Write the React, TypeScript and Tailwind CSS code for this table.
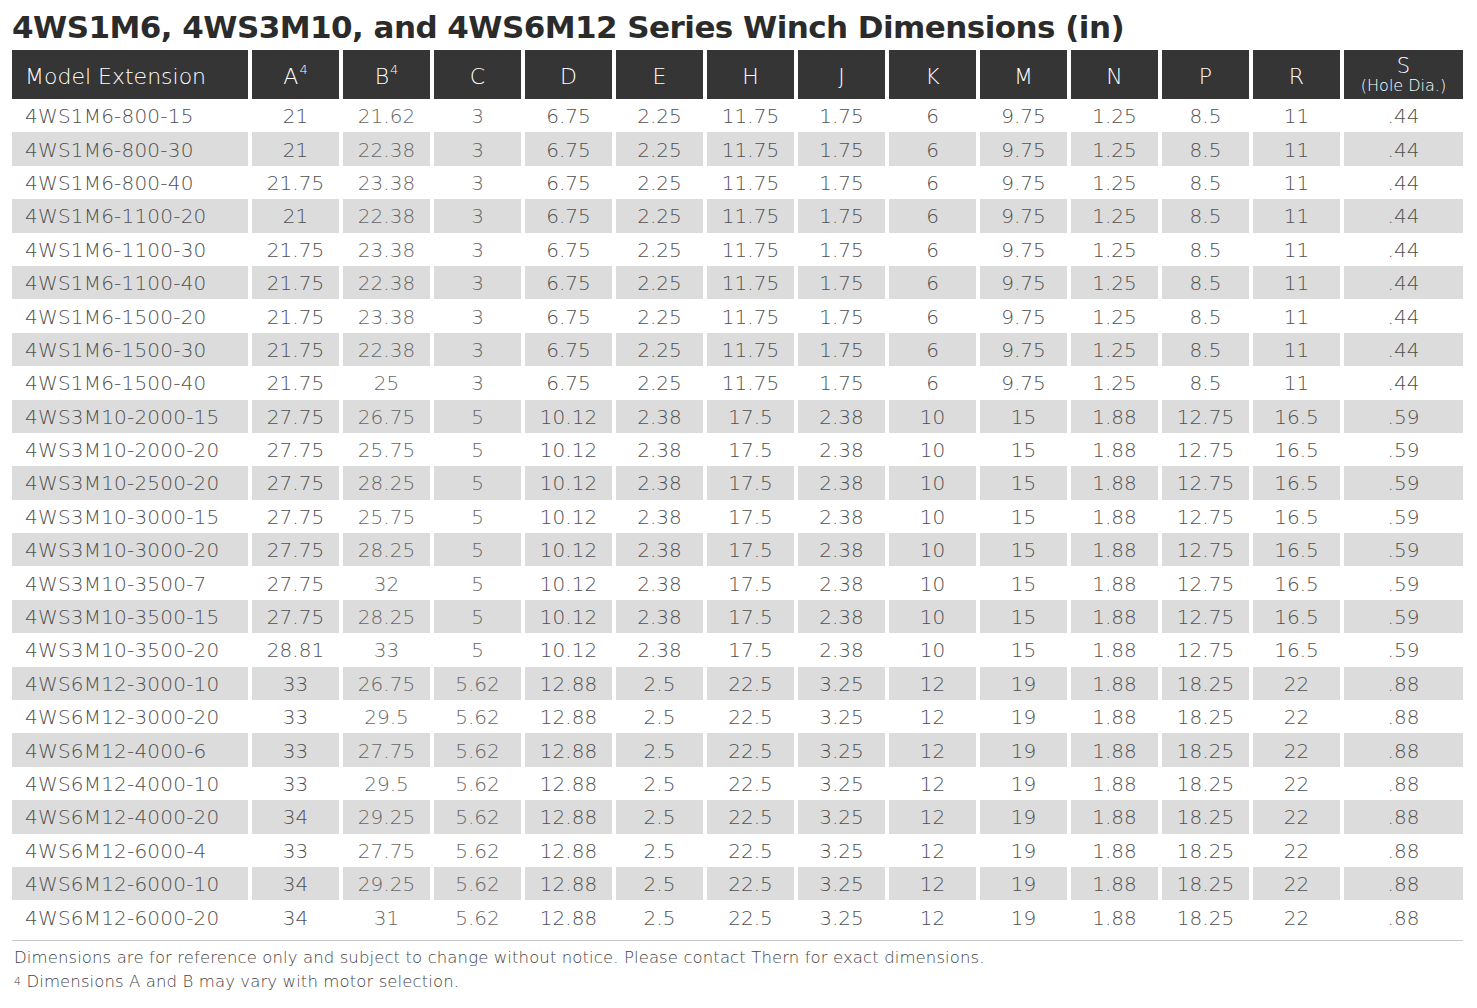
const cols = ["A", "B", "C", "D", "E", "H", "J", "K", "M", "N", "P", "R"];

type Row = [string, string, string];

const series = {
  m6: ["3", "6.75", "2.25", "11.75", "1.75", "6", "9.75", "1.25", "8.5", "11", ".44"],
  m10: ["5", "10.12", "2.38", "17.5", "2.38", "10", "15", "1.88", "12.75", "16.5", ".59"],
  m12: ["5.62", "12.88", "2.5", "22.5", "3.25", "12", "19", "1.88", "18.25", "22", ".88"],
};

const rows: Row[] = [
  ["4WS1M6-800-15", "21", "21.62"],
  ["4WS1M6-800-30", "21", "22.38"],
  ["4WS1M6-800-40", "21.75", "23.38"],
  ["4WS1M6-1100-20", "21", "22.38"],
  ["4WS1M6-1100-30", "21.75", "23.38"],
  ["4WS1M6-1100-40", "21.75", "22.38"],
  ["4WS1M6-1500-20", "21.75", "23.38"],
  ["4WS1M6-1500-30", "21.75", "22.38"],
  ["4WS1M6-1500-40", "21.75", "25"],
  ["4WS3M10-2000-15", "27.75", "26.75"],
  ["4WS3M10-2000-20", "27.75", "25.75"],
  ["4WS3M10-2500-20", "27.75", "28.25"],
  ["4WS3M10-3000-15", "27.75", "25.75"],
  ["4WS3M10-3000-20", "27.75", "28.25"],
  ["4WS3M10-3500-7", "27.75", "32"],
  ["4WS3M10-3500-15", "27.75", "28.25"],
  ["4WS3M10-3500-20", "28.81", "33"],
  ["4WS6M12-3000-10", "33", "26.75"],
  ["4WS6M12-3000-20", "33", "29.5"],
  ["4WS6M12-4000-6", "33", "27.75"],
  ["4WS6M12-4000-10", "33", "29.5"],
  ["4WS6M12-4000-20", "34", "29.25"],
  ["4WS6M12-6000-4", "33", "27.75"],
  ["4WS6M12-6000-10", "34", "29.25"],
  ["4WS6M12-6000-20", "34", "31"],
];

function restFor(model: string) {
  if (model.startsWith("4WS1M6")) return series.m6;
  if (model.startsWith("4WS3M10")) return series.m10;
  return series.m12;
}

const gridCols = "grid grid-cols-[236px_repeat(12,87px)_119px] gap-x-[4px]";

export default function App() {
  return (
    <div className="min-h-[1008px] w-[1477px] bg-white px-[12px] pt-[6px] font-['DejaVu_Sans',sans-serif] text-[#505050]">
      <h1 className="text-[31px] font-bold leading-[42px] tracking-[-0.55px] text-[#2b2b2b]">
        4WS1M6, 4WS3M10, and 4WS6M12 Series Winch Dimensions (in)
      </h1>

      <div className="mt-[2px] w-[1451px]">
        {/* header */}
        <div className={`${gridCols} h-[49px]`}>
          <div className="flex items-center bg-[#353535] pl-[13px] pt-[4px] text-[22px] font-extralight text-white">
            Model Extension
          </div>
          {cols.map((c) => (
            <div
              key={c}
              className="flex items-center justify-center bg-[#353535] pt-[4px] text-[22px] font-extralight text-white"
            >
              {c}
              {(c === "A" || c === "B") && (
                <sup className="ml-[1px] text-[13px]">4</sup>
              )}
            </div>
          ))}
          <div className="flex flex-col items-center justify-center bg-[#353535] pt-[2px] font-extralight text-white">
            <span className="text-[21px] leading-[20px]">S</span>
            <span className="text-[16px] leading-[19px]">(Hole Dia.)</span>
          </div>
        </div>

        {/* body */}
        {rows.map(([model, a, b], i) => {
          const shaded = i % 2 === 1;
          const cell = shaded ? "bg-[#dcdcdc]" : "bg-white";
          const vals = [a, b, ...restFor(model)];
          return (
            <div key={model} className={`${gridCols} h-[33.4px] text-[20px] font-extralight`}>
              <div className={`${cell} flex items-center pl-[13px] pt-[1px] tracking-[0.2px]`}>
                {model}
              </div>
              {vals.map((v, j) => (
                <div
                  key={j}
                  className={`${cell} flex items-center justify-center pt-[1px] ${
                    j === 1 || j === 2 ? "text-[#676767]" : ""
                  }`}
                >
                  {v}
                </div>
              ))}
            </div>
          );
        })}

        <div className="mt-[6px] border-t border-[#c8c8c8] pt-[5px] text-[16.5px] font-extralight leading-[24px] text-[#444]">
          <p className="pl-[2px] tracking-[0.1px]">
            Dimensions are for reference only and subject to change without notice. Please
            contact Thern for exact dimensions.
          </p>
          <p className="pl-[2px] tracking-[0.1px]">
            <span className="align-top text-[11px]">4</span> Dimensions A and B may vary
            with motor selection.
          </p>
        </div>
      </div>
    </div>
  );
}
